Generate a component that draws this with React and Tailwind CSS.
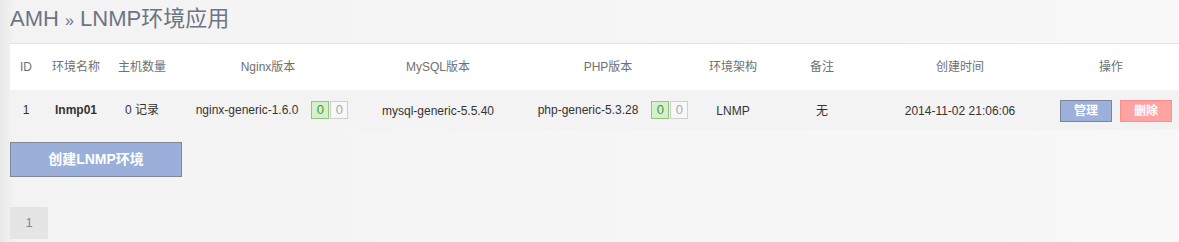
import React from 'react'

const font = { fontFamily: '"Liberation Sans", "Noto Sans CJK SC", Arial, sans-serif' }

function Badges() {
  return (
    <span className="inline-flex items-center gap-[1px] ml-[13px] align-middle">
      <span className="w-[18px] h-[18px] flex items-center justify-center border border-[#8cc97c] bg-[#d6f0cb] text-[#3f9a32] text-[13px] leading-none">0</span>
      <span className="w-[18px] h-[18px] flex items-center justify-center border border-[#cfcfcf] bg-[#f8f8f8] text-[#aaa] text-[13px] leading-none">0</span>
    </span>
  )
}

export default function App() {
  const cols = ['w-[32px]', 'w-[68px]', 'w-[64px]', 'w-[188px]', 'w-[152px]', 'w-[188px]', 'w-[62px]', 'w-[116px]', 'w-[160px]', 'w-[142px]']
  const heads = ['ID', '环境名称', '主机数量', 'Nginx版本', 'MySQL版本', 'PHP版本', '环境架构', '备注', '创建时间', '操作']
  return (
    <div style={font} className="w-[1179px] h-[242px] overflow-hidden bg-[linear-gradient(to_right,#e9e9e9,#f3f3f3_14px,#f8f8f8)]">
      <div className="pl-[10px] pt-[6px]">
        <h1 className="text-[22px] leading-[26px] text-[#6d7486] h-[37px]">
          AMH <span className="text-[16px]">»</span> LNMP环境应用
        </h1>
        <table className="table-fixed w-[1172px] border-collapse border-t border-[#e4e4e4] text-[12px]">
          <colgroup>
            {cols.map((c, i) => <col key={i} className={c} />)}
          </colgroup>
          <thead>
            <tr className="bg-white h-[46px]">
              {heads.map((h, i) => (
                <th key={i} className="text-center font-normal text-[#707070] p-0">{h}</th>
              ))}
            </tr>
          </thead>
          <tbody>
            <tr className="bg-[#f3f3f3] h-[40px] text-[#333] text-center">
              <td>1</td>
              <td className="font-bold">lnmp01</td>
              <td>0 记录</td>
              <td className="pl-[8px]">
                <span className="inline-flex items-center">nginx-generic-1.6.0<Badges /></span>
              </td>
              <td className="pt-[2px]">mysql-generic-5.5.40</td>
              <td className="pl-[10px]">
                <span className="inline-flex items-center">php-generic-5.3.28<Badges /></span>
              </td>
              <td className="pt-[2px]">LNMP</td>
              <td className="pt-[2px]">无</td>
              <td className="pt-[2px]">2014-11-02 21:06:06</td>
              <td className="pl-[10px] pt-[2px]">
                <div className="flex justify-center gap-[8px]">
                  <button className="w-[52px] h-[22px] border border-[#7d8698] bg-[#9cb0d9] text-white font-bold text-[12px]">管理</button>
                  <button className="w-[52px] h-[22px] border border-[#ff8c8c] bg-[#ffa3a3] text-white font-bold text-[12px]">删除</button>
                </div>
              </td>
            </tr>
          </tbody>
        </table>
        <button className="mt-[12px] w-[172px] h-[35px] border border-[#7f8797] bg-[#9aafd9] text-white font-bold text-[14px] block">创建LNMP环境</button>
        <div className="mt-[30px] w-[38px] h-[32px] bg-[#e5e5e5] text-[#888] text-[13px] flex items-center justify-center">1</div>
      </div>
    </div>
  )
}
